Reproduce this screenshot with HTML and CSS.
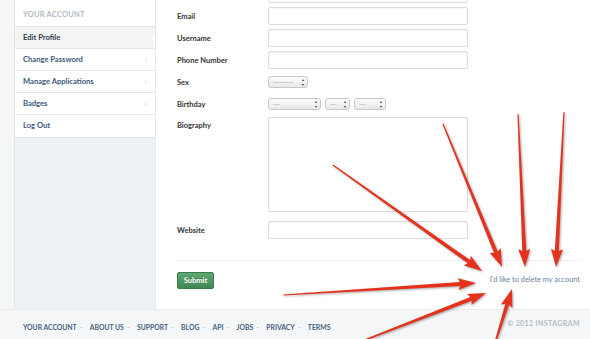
FILE: index.html
```html
<!doctype html>
<html>
<head>
	<title>Edit Profile</title>
	<link rel="stylesheet" href="styles.css">
</head>
<body>
<div class="page">
	<div class="top">
		<div class="gutter"></div>
		<div class="sidebar">
			<ul class="nav">
				<li class="nav-head">Your Account</li>
				<li class="nav-item active">Edit Profile</li>
				<li class="nav-item more">Change Password</li>
				<li class="nav-item more">Manage Applications</li>
				<li class="nav-item more">Badges</li>
				<li class="nav-item">Log Out</li>
			</ul>
		</div>
		<div class="main">
			<form class="form">
				<span class="lbl"></span><input class="txt" type="text">
				<label class="lbl">Email</label><input class="txt" type="text">
				<label class="lbl">Username</label><input class="txt" type="text">
				<label class="lbl">Phone Number</label><input class="txt" type="text">
				<label class="lbl">Sex</label>
				<div class="sels"><span class="sel w39">---------</span></div>
				<label class="lbl">Birthday</label>
				<div class="sels"><span class="sel w52">---</span><span class="sel w25">---</span><span class="sel w32">---</span></div>
				<label class="lbl lbl-top">Biography</label><div class="area"></div>
				<label class="lbl">Website</label><input class="txt" type="text">
			</form>
			<div class="actions">
				<button class="submit" type="button">Submit</button>
				<a class="delete" href="#">I'd like to delete my account</a>
			</div>
		</div>
	</div>
	<div class="footer">
		<div class="links">
			<a href="#">Your Account</a><span class="dot">&middot;</span>
			<a href="#">About Us</a><span class="dot">&middot;</span>
			<a href="#">Support</a><span class="dot">&middot;</span>
			<a href="#">Blog</a><span class="dot">&middot;</span>
			<a href="#">API</a><span class="dot">&middot;</span>
			<a href="#">Jobs</a><span class="dot">&middot;</span>
			<a href="#">Privacy</a><span class="dot">&middot;</span>
			<a href="#">Terms</a>
		</div>
		<div class="copy">&copy; 2012 Instagram</div>
	</div>

	<svg class="arrows" width="590" height="339" viewBox="0 0 590 339">
		<g fill="#e5321c">
			<polygon transform="translate(482 271) rotate(35.4)" points="0,0 -18,-6 -16,-2 -183,-0.6 -183,0.6 -16,2 -18,6"/>
			<polygon transform="translate(502 267) rotate(67.6)" points="0,0 -18,-6 -16,-2 -155,-0.6 -155,0.6 -16,2 -18,6"/>
			<polygon transform="translate(525 267) rotate(87.4)" points="0,0 -18,-6 -16,-2 -153,-0.6 -153,0.6 -16,2 -18,6"/>
			<polygon transform="translate(556 267) rotate(92.95)" points="0,0 -18,-6 -16,-2 -155,-0.6 -155,0.6 -16,2 -18,6"/>
			<polygon transform="translate(476 283) rotate(-3.56)" points="0,0 -18,-6 -16,-2 -193,-0.6 -193,0.6 -16,2 -18,6"/>
			<polygon transform="translate(486 293) rotate(-21.2)" points="0,0 -18,-6 -16,-2 -130,-0.8 -130,0.8 -16,2 -18,6"/>
			<polygon transform="translate(512 289) rotate(-72.6)" points="0,0 -18,-6 -16,-2 -54,-0.9 -54,0.9 -16,2 -18,6"/>
		</g>
	</svg>
</div>
</body>
</html>
```

FILE: styles.css
```css
* { box-sizing: border-box; }

body {
	margin: 0;
	background: #f4f6f8;
	font-family: Lato, "Open Sans", sans-serif;
}

.page {
	position: relative;
	width: 590px;
	height: 339px;
	overflow: hidden;
}

.top {
	display: flex;
	height: 309px;
}

.gutter { width: 14px; }

/* sidebar */
.sidebar {
	width: 141px;
	background: #eef1f4;
	border-left: 1px solid #e2e6ea;
}
.nav {
	list-style: none;
	margin: 0;
	padding: 0;
	background: #fff;
	border-bottom: 1px solid #dfe3e7;
}
.nav-head {
	height: 27px;
	padding: 10px 0 0 8px;
	font-size: 7.5px;
	font-weight: 700;
	text-transform: uppercase;
	color: #b3bac2;
	letter-spacing: 0.2px;
	border-bottom: 1px solid #e6e9ec;
}
.nav-item {
	position: relative;
	height: 22px;
	line-height: 21px;
	padding-left: 8px;
	font-size: 7.6px;
	font-weight: 700;
	color: #3d5877;
	border-bottom: 1px solid #e6e9ec;
}
.nav-item:last-child { border-bottom: 0; }
.nav-item.active {
	background: #f3f4f6;
	color: #2f3b48;
}
.nav-item.active::after {
	content: "";
	position: absolute;
	right: 0;
	top: 7px;
	border: 4px solid transparent;
	border-right-color: #fff;
	border-left: 0;
}
.nav-item.more::after {
	content: "\203A";
	position: absolute;
	right: 8px;
	top: 0;
	font-size: 10px;
	font-weight: 400;
	color: #d2d6db;
}

/* main form */
.main {
	flex: 1;
	background: #fff;
	border-left: 1px solid #e6e9ec;
	padding: 0 10px 0 21px;
}
.form {
	display: grid;
	grid-template-columns: 91px 200px;
	row-gap: 4px;
	align-items: center;
	margin-top: -15px;
}
.lbl {
	font-size: 7.5px;
	font-weight: 700;
	color: #333;
}
.lbl-top {
	align-self: start;
	padding-top: 4px;
}
.txt {
	height: 18px;
	width: 200px;
	margin: 0;
	border: 1px solid #dcdcdc;
	border-radius: 2px;
	background: #fff;
	box-shadow: inset 0 1px 1px rgba(0, 0, 0, 0.04);
}
.sels {
	display: flex;
	gap: 4px;
	height: 18px;
	align-items: center;
}
.sel {
	position: relative;
	height: 12px;
	line-height: 10px;
	padding-left: 4px;
	font-size: 6px;
	color: #777;
	border: 1px solid #c9c9c9;
	border-radius: 3px;
	background: linear-gradient(#fdfdfd, #e8e8e8);
}
.sel::after {
	content: "\25B4\A\25BE";
	white-space: pre;
	position: absolute;
	right: 3px;
	top: 0;
	font-size: 4px;
	line-height: 4.5px;
	color: #333;
	padding-top: 1px;
}
.w39 { width: 40px; }
.w52 { width: 53px; }
.w25 { width: 25px; }
.w32 { width: 32px; }
.area {
	height: 95px;
	margin-bottom: 5px;
	border: 1px solid #dcdcdc;
	border-radius: 2px;
}

.actions {
	display: flex;
	justify-content: space-between;
	align-items: center;
	margin-top: 21px;
	padding-top: 11px;
	border-top: 1px solid #eef0f2;
}
.submit {
	height: 17px;
	width: 37px;
	padding: 0;
	font-family: inherit;
	font-size: 7.5px;
	font-weight: 700;
	color: #fff;
	background: linear-gradient(#5fa872, #3f8652);
	border: 1px solid #3a7b4c;
	border-radius: 2px;
	text-shadow: 0 -1px 0 rgba(0, 0, 0, 0.2);
}
.delete {
	font-size: 7.4px;
	color: #6b819b;
	text-decoration: none;
	margin-bottom: 2px;
}

/* footer */
.footer {
	display: flex;
	justify-content: space-between;
	align-items: center;
	height: 30px;
	padding: 0 10px 3px 23px;
	border-top: 1px solid #e9ecef;
}
.links a {
	font-size: 6.8px;
	font-weight: 700;
	text-transform: uppercase;
	color: #47627f;
	text-decoration: none;
}
.dot {
	margin: 0 3.6px;
	font-size: 7px;
	color: #a8b2bd;
}
.copy {
	font-size: 7px;
	font-weight: 700;
	text-transform: uppercase;
	color: #b5bcc4;
	letter-spacing: 0.4px;
}

.arrows {
	position: absolute;
	left: 0;
	top: 0;
	pointer-events: none;
	filter: drop-shadow(1px 1px 0.8px rgba(0, 0, 0, 0.35));
}
```
